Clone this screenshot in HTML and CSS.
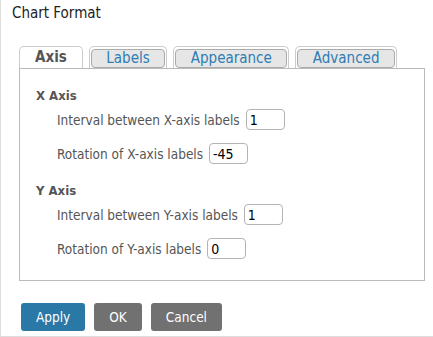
FILE: index.html
```html
<!DOCTYPE html>
<html lang="en">
<head>
    <meta charset="UTF-8">
    <meta name="viewport" content="width=device-width, initial-scale=1.0">
    <title>Chart Format</title>
    <link rel="stylesheet" href="styles.css">
</head>
<body>

    <div class="dialog">
        <div class="dialog-title">Chart Format</div>

        <div class="tabs">
            <div class="tab active">Axis</div>
            <div class="tab"><span>Labels</span></div>
            <div class="tab"><span>Appearance</span></div>
            <div class="tab"><span>Advanced</span></div>
        </div>

        <div class="panel">
            <div class="section-title">X Axis</div>
            <div class="field">
                <label>Interval between X-axis labels</label>
                <input type="text" value="1">
            </div>
            <div class="field">
                <label>Rotation of X-axis labels</label>
                <input type="text" value="-45">
            </div>

            <div class="section-title">Y Axis</div>
            <div class="field">
                <label>Interval between Y-axis labels</label>
                <input type="text" value="1">
            </div>
            <div class="field">
                <label>Rotation of Y-axis labels</label>
                <input type="text" value="0">
            </div>
        </div>

        <div class="buttons">
            <button class="btn apply-btn">Apply</button>
            <button class="btn">OK</button>
            <button class="btn">Cancel</button>
        </div>
    </div>

</body>
</html>
```

FILE: styles.css
```css
body {
    margin: 0;
    font-family: "DejaVu Sans Condensed", "DejaVu Sans", sans-serif;
    font-stretch: condensed;
    background: #fff;
}
.dialog {
    box-sizing: border-box;
    height: 337px;
    border-left: 1px solid #ddd;
    border-bottom: 1px solid #ddd;
}
.dialog-title {
    padding: 4px 0 0 11px;
    font-size: 15px;
    line-height: 18px;
    color: #222;
}
.tabs {
    display: flex;
    align-items: flex-end;
    gap: 6px;
    margin: 24px 0 0 18px;
    height: 22px;
}
.tab {
    box-sizing: border-box;
    height: 22px;
    border: 1px solid #ccc;
    border-bottom: none;
    border-radius: 5px 5px 0 0;
    padding: 2px 1px 0;
    background: #fff;
}
.tab span {
    display: block;
    background: #e6e6e6;
    border: 1px solid #aaa;
    border-radius: 4px;
    padding: 0 14.5px;
    font-size: 15px;
    line-height: 17px;
    color: #2e7db5;
}
.tab.active {
    padding: 0 15px;
    font-size: 15px;
    font-weight: bold;
    line-height: 21px;
    color: #555;
}
.panel {
    box-sizing: border-box;
    width: 406px;
    margin-left: 18px;
    border: 1px solid #bbb;
    padding: 19px 0 21px 16px;
}
.section-title {
    font-size: 13px;
    font-weight: bold;
    line-height: 16px;
    color: #555;
}
.section-title + .field { margin-top: 5px; }
.field + .field { margin-top: 13px; }
.field + .section-title { margin-top: 19px; }
.field {
    display: flex;
    align-items: center;
    gap: 6px;
    height: 21px;
    margin-left: 21px;
    font-size: 13.5px;
    color: #555;
}
.field input {
    box-sizing: border-box;
    width: 39px;
    height: 21px;
    border: 1px solid #b3b3b3;
    border-radius: 4px;
    padding: 0 3px;
    font-family: inherit;
    font-size: 14px;
    color: #000;
}
.buttons {
    display: flex;
    gap: 9px;
    margin: 22px 0 0 20px;
}
.btn {
    height: 28px;
    border: none;
    border-radius: 3px;
    padding: 0 15px;
    background: #717171;
    color: #fff;
    font-family: inherit;
    font-size: 13.5px;
    cursor: pointer;
}
.apply-btn { background: #2a78a5; }
```
